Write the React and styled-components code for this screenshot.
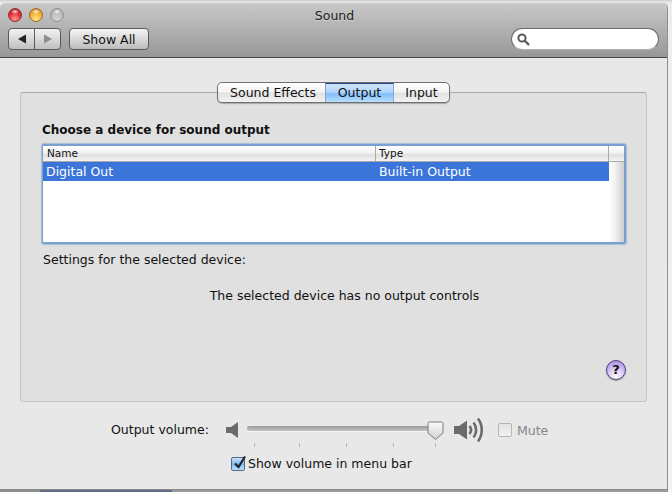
import React from "react";
import styled, { createGlobalStyle } from "styled-components";

const Global = createGlobalStyle`
  html, body { margin: 0; padding: 0; background: #f4f4f4; }
  body { width: 672px; height: 492px; overflow: hidden; font-family: "DejaVu Sans", "Liberation Sans", sans-serif; }
`;
const Page = styled.div`
  width: 672px; height: 492px; padding-top: 3px; box-sizing: border-box; overflow: hidden;
  background: linear-gradient(#cfcfcf 0, #ededed 3px, #f2f2f2 100%);
`;
const Window = styled.div`
  width: 668px; height: 487px; display: flex; flex-direction: column;
  background: #e8e8e8; border-right: 1px solid #8e8e8e; border-bottom: 1px solid #8a8a8a;
  box-sizing: border-box; border-radius: 5px 5px 0 0; overflow: hidden;
`;
const BackdropStrip = styled.div`
  width: 668px; height: 2px; display: grid; grid-template-columns: 40px 132px 1fr;
`;
const BackdropPart = styled.span`background: ${p => p.$c};`;
const Toolbar = styled.div`
  height: 55px; flex: none; box-sizing: border-box; border-bottom: 1px solid #474747;
  background: linear-gradient(#c9c9c9, #979797);
  display: flex; flex-direction: column; padding: 2px 8px 0 8px;
`;
const TitleRow = styled.div`
  height: 20px; display: flex; align-items: center; position: relative;
`;
const Lights = styled.div`display: flex; gap: 7px;`;
const Light = styled.span`
  width: 14px; height: 14px; border-radius: 50%; box-sizing: border-box; display: block;
  border: 1px solid ${p => p.$edge};
  background: radial-gradient(ellipse 4px 2.5px at 50% 22%, rgba(255,255,255,.85), rgba(255,255,255,0) 100%), ${p => p.$bg};
`;
const Title = styled.div`
  flex: 1; text-align: center; font-size: 12.5px; color: #1c1c1c; margin-right: 54px;
  text-shadow: 0 1px 0 rgba(255,255,255,.35);
`;
const ToolRow = styled.div`
  display: flex; align-items: center; height: 22px; margin-top: 3px;
`;
const NavGroup = styled.div`
  display: flex; width: 53px; height: 22px; box-sizing: border-box; border: 1px solid #5a5a5a; border-radius: 4px;
  background: linear-gradient(#f2f2f2, #c0c0c0); overflow: hidden;
`;
const NavCell = styled.div`
  flex: 1; display: flex; align-items: center; justify-content: center;
  & + & { border-left: 1px solid #5a5a5a; }
`;
const ShowAll = styled.div`
  margin-left: 8px; width: 80px; height: 22px; box-sizing: border-box; border: 1px solid #5a5a5a; border-radius: 4px;
  background: linear-gradient(#f4f4f4, #bdbdbd); font-size: 12.5px; color: #111;
  display: flex; align-items: center; justify-content: center;
`;
const Search = styled.div`
  margin-left: auto; width: 148px; height: 22px; box-sizing: border-box; border-radius: 11px;
  background: #fff; border: 1px solid #6a6a6a; border-bottom-color: #b0b0b0; display: flex; align-items: center; padding-left: 4px;
`;
const Content = styled.div`
  flex: 1; display: flex; flex-direction: column; padding: 24px 20px 0 20px; min-height: 0;
`;
const Tabs = styled.div`
  align-self: center; display: flex; height: 21px; box-sizing: border-box; border: 1px solid #6f6f6f; border-radius: 5px;
  background: linear-gradient(#ffffff, #f4f4f4 45%, #e2e2e2 55%, #f2f2f2); overflow: hidden; margin-bottom: -11px;
  position: relative; z-index: 1; box-shadow: 0 1px 1px rgba(0,0,0,.25);
`;
const Tab = styled.div`
  width: ${p => p.$w}px; padding-left: ${p => p.$shift || 0}px; font-size: 12.5px; line-height: 20px; text-align: center; color: #111; box-sizing: border-box;
  ${p => p.$active && `
    background: linear-gradient(#cfe4fb, #b3d6fb 45%, #82bdfb 55%, #b9e0fd);
    border-left: 1px solid #7fa6d4; border-right: 1px solid #7fa6d4; border-top: 1px solid #2a3f8e;
    line-height: 18px;
  `}
`;
const Panel = styled.div`
  width: 627px; height: 310px; box-sizing: border-box; border: 1px solid #c4c4c4; border-top-color: #a9a9a9; border-radius: 3px;
  background: #e0e0e0; padding: 29px 21px 0 21px; display: flex; flex-direction: column; flex: none;
`;
const Heading = styled.div`
  font-size: 12px; font-weight: 700; color: #111; line-height: 16px;
`;
const TableBox = styled.div`
  margin-top: 6px; width: 584px; height: 100px; box-sizing: border-box; background: #fff;
  border-style: solid; border-color: #7ba0cf; border-width: 2px 2px 2px 1px; border-radius: 2px;
  box-shadow: 0 0 1px 1px rgba(123,160,207,.55);
  display: flex; flex-direction: column; overflow: hidden; flex: none;
`;
const HeaderRow = styled.div`
  display: grid; grid-template-columns: 332px 1fr 16px; height: 16px; flex: none; box-sizing: border-box;
  border-bottom: 1px solid #a8a8a8; background: linear-gradient(#fff, #f4f4f4 40%, #e0e0e0 60%, #f4f4f4);
`;
const HeaderCell = styled.div`
  font-size: 10.5px; line-height: 15px; padding-left: 4px; color: #111;
  & + & { border-left: 1px solid #a8a8a8; padding-left: 3px; }
`;
const Body = styled.div`flex: 1; display: flex; min-height: 0;`;
const Rows = styled.div`flex: 1; background: #fff;`;
const Row = styled.div`
  height: 19px; background: #3b75d9; color: #fff; display: grid; grid-template-columns: 333px 1fr;
  font-size: 12.5px; line-height: 19px;
`;
const Cell = styled.div`padding-left: 3px;`;
const Scroll = styled.div`width: 15px; flex: none; background: linear-gradient(90deg, #ffffff, #f2f2f2 40%, #cfcfcf);`;
const Label = styled.div`font-size: 12.5px; color: #111; line-height: 16px;`;
const SettingsLabel = styled(Label)`margin-top: 8px; margin-left: 1px;`;
const Notice = styled(Label)`text-align: center; margin-top: 20px; padding-left: 22px;`;
const HelpRow = styled.div`margin-top: 56px; display: flex; justify-content: flex-end; margin-right: -1px;`;
const Help = styled.div`
  width: 20px; height: 20px; border-radius: 50%; box-sizing: border-box; border: 1px solid #4d3d80;
  background: radial-gradient(circle at 50% 85%, #fff 0, #d8c7f5 45%, #9d80d8 100%);
  font-size: 13px; font-weight: 700; color: #111; text-align: center; line-height: 18px;
  box-shadow: 0 1px 1px rgba(0,0,0,.3);
`;
const VolumeRow = styled.div`display: flex; align-items: center; height: 28px; margin-top: 14px; margin-left: 91px;`;
const VolLabel = styled(Label)`width: 115px; flex: none; white-space: nowrap;`;
const SliderWrap = styled.div`position: relative; width: 196px; height: 28px; flex: none;`;
const Track = styled.div`
  position: absolute; left: 1px; top: 10px; width: 188px; height: 5px; border-radius: 3px;
  background: linear-gradient(#9a9a9a, #c4c4c4); box-shadow: 0 1px 0 #f6f6f6;
`;
const Tick = styled.span`position: absolute; top: 27px; width: 1px; height: 4px; background: #b4b4b4;`;
const Thumb = styled.svg`position: absolute; left: 181px; top: 5px;`;
const MuteBox = styled.span`
  width: 14px; height: 14px; box-sizing: border-box; border: 1px solid #b5b5b5; border-radius: 2px; background: linear-gradient(#e4e4e4, #f0f0f0); margin-left: 14px; flex: none;
`;
const MuteLabel = styled.span`font-size: 12.5px; color: #85878c; margin-left: 5px;`;
const CheckRow = styled.div`display: flex; align-items: center; margin-top: 11px; margin-left: 211px; height: 18px;`;
const Check = styled.span`
  position: relative; width: 14px; height: 14px; box-sizing: border-box; border: 1px solid #55698c; border-radius: 2px;
  background: linear-gradient(#cfe4fb, #7fb5ef 50%, #bfe0fd); flex: none;
`;
const CheckMark = styled.svg`position: absolute; left: 0; top: -4px;`;
const CheckLabel = styled(Label)`margin-left: 3px; white-space: nowrap;`;

const ticks = [8, 53, 100, 147, 189];

export default function App() {
  return (
    <Page>
      <Global />
      <Window>
        <Toolbar>
          <TitleRow>
            <Lights>
              <Light $edge="#8d2f33" $bg="radial-gradient(circle at 50% 85%, #ff9a9a 0, #e32b35 55%, #b01c2a 100%)" />
              <Light $edge="#9c6a28" $bg="radial-gradient(circle at 50% 85%, #ffe98a 0, #f5ad35 55%, #c9782a 100%)" />
              <Light $edge="#8f8f8f" $bg="radial-gradient(circle at 50% 85%, #d6d6d6 0, #b9b9b9 60%, #a2a2a2 100%)" />
            </Lights>
            <Title>Sound</Title>
          </TitleRow>
          <ToolRow>
            <NavGroup>
              <NavCell>
                <svg width="10" height="10" viewBox="0 0 10 10"><path d="M1 5 9 .5v9z" fill="#222" /></svg>
              </NavCell>
              <NavCell>
                <svg width="10" height="10" viewBox="0 0 10 10"><path d="M9 5 1 .5v9z" fill="#8d8d8d" /></svg>
              </NavCell>
            </NavGroup>
            <ShowAll>Show All</ShowAll>
            <Search>
              <svg width="14" height="14" viewBox="0 0 14 14" fill="none">
                <circle cx="6" cy="6" r="3.6" stroke="#5a5a5a" strokeWidth="2" />
                <path d="m8.8 8.800 3.600 3.600" stroke="#5a5a5a" strokeWidth="2.2" strokeLinecap="round" />
              </svg>
            </Search>
          </ToolRow>
        </Toolbar>
        <Content>
          <Tabs>
            <Tab $w={107} $shift={3}>Sound Effects</Tab>
            <Tab $w={69} $active>Output</Tab>
            <Tab $w={55}>Input</Tab>
          </Tabs>
          <Panel>
            <Heading>Choose a device for sound output</Heading>
            <TableBox>
              <HeaderRow>
                <HeaderCell>Name</HeaderCell>
                <HeaderCell>Type</HeaderCell>
                <HeaderCell />
              </HeaderRow>
              <Body>
                <Rows>
                  <Row>
                    <Cell>Digital Out</Cell>
                    <Cell>Built-in Output</Cell>
                  </Row>
                </Rows>
                <Scroll />
              </Body>
            </TableBox>
            <SettingsLabel>Settings for the selected device:</SettingsLabel>
            <Notice>The selected device has no output controls</Notice>
            <HelpRow><Help>?</Help></HelpRow>
          </Panel>
          <VolumeRow>
            <VolLabel>Output volume:</VolLabel>
            <svg width="16" height="18" viewBox="0 0 16 18" style={{ flex: "none", marginRight: 4 }}>
              <path d="M0 6h5l7-5v16l-7-5H0z" fill="#6b6b6b" />
            </svg>
            <SliderWrap>
              <Track />
              {ticks.map(x => <Tick key={x} style={{ left: x }} />)}
              <Thumb width="17" height="21" viewBox="0 0 17 21">
                <defs>
                  <linearGradient id="th" x1="0" y1="0" x2="0" y2="1">
                    <stop offset="0" stopColor="#fbfbfb" /><stop offset="1" stopColor="#d0d0d0" />
                  </linearGradient>
                </defs>
                <path d="M2.5 1h12a1.500 1.500 0 0 1 1.500 1.500V12l-7.500 6.500L1 12V2.500A1.500 1.500 0 0 1 2.500 1z" fill="url(#th)" stroke="#7d7d7d" />
              </Thumb>
            </SliderWrap>
            <svg width="30" height="26" viewBox="0 0 30 26" fill="none" style={{ flex: "none", marginLeft: 12 }}>
              <path d="M0 9h5l8-5.500v19L5 17H0z" fill="#6b6b6b" />
              <path d="M15.500 9c2 2.500 2 5.500 0 8" stroke="#6b6b6b" strokeWidth="2.600" />
              <path d="M19.500 5.500c3.500 4.500 3.500 10.500 0 15" stroke="#6b6b6b" strokeWidth="2.600" />
              <path d="M24 1.500c5 7 5 16 0 23" stroke="#6b6b6b" strokeWidth="2.600" />
            </svg>
            <MuteBox />
            <MuteLabel>Mute</MuteLabel>
          </VolumeRow>
          <CheckRow>
            <Check>
              <CheckMark width="17" height="17" viewBox="0 0 17 17" fill="none">
                <path d="M3 9.500 6.500 13 13 2.500" stroke="#1c2430" strokeWidth="2.200" />
              </CheckMark>
            </Check>
            <CheckLabel>Show volume in menu bar</CheckLabel>
          </CheckRow>
        </Content>
      </Window>
      <BackdropStrip>
        <BackdropPart $c="#8f8f8f" />
        <BackdropPart $c="#5f6c86" />
        <BackdropPart $c="#9a9a9a" />
      </BackdropStrip>
    </Page>
  );
}
